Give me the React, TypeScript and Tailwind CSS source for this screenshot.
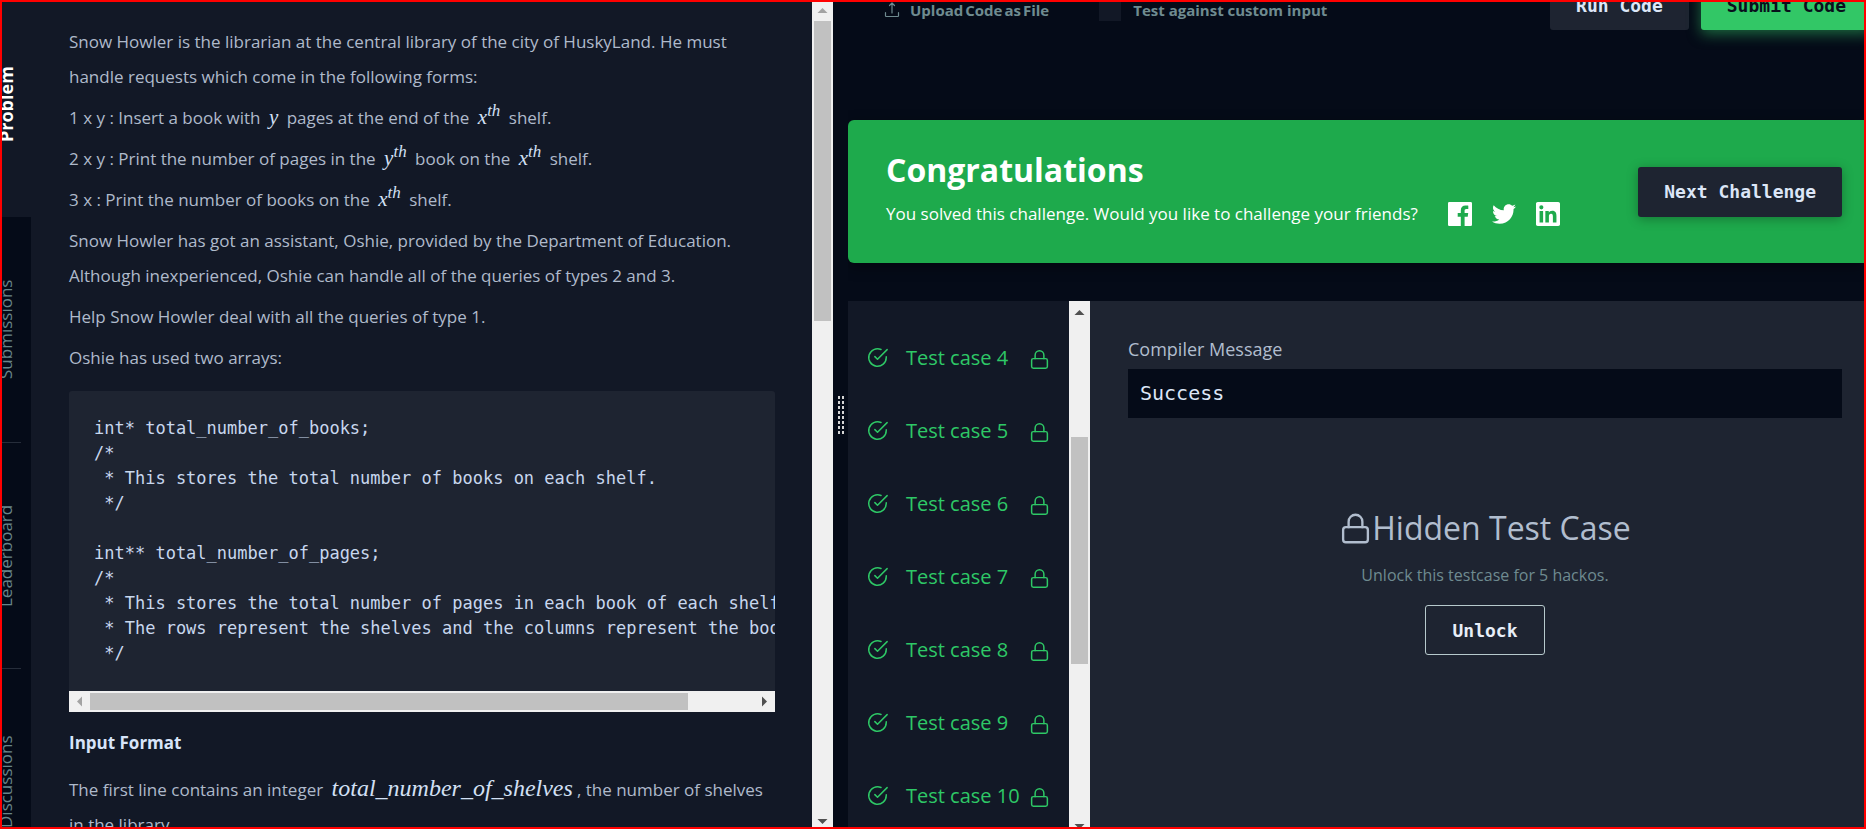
import type { ReactNode } from "react";
import { FaTwitter } from "react-icons/fa";

const CODE = `int* total_number_of_books;
/*
 * This stores the total number of books on each shelf.
 */

int** total_number_of_pages;
/*
 * This stores the total number of pages in each book of each shelf.
 * The rows represent the shelves and the columns represent the books.
 */`;

const TABS = ["Problem", "Submissions", "Leaderboard", "Discussions"];
const CASES = [4, 5, 6, 7, 8, 9, 10];

function LockIcon({ className }: { className: string }) {
  return (
    <svg viewBox="0 0 24 24" fill="none" stroke="currentColor" strokeWidth="1.7" strokeLinecap="round" strokeLinejoin="round" className={className} aria-hidden="true">
      <rect x="3" y="11" width="18" height="11" rx="2" />
      <path d="M7 11V7a5 5 0 0 1 10 0v4" />
    </svg>
  );
}

function CheckIcon() {
  return (
    <svg viewBox="0 0 24 24" fill="none" stroke="currentColor" strokeWidth="1.7" strokeLinecap="round" strokeLinejoin="round" className="size-[21px] shrink-0" aria-hidden="true">
      <path d="M22 11.08V12a10 10 0 1 1-5.93-9.14" />
      <path d="M23 3 12 14.01l-3-3" />
    </svg>
  );
}

function UploadIcon() {
  return (
    <svg viewBox="0 0 16 16" fill="none" stroke="currentColor" strokeWidth="1.2" strokeLinecap="round" strokeLinejoin="round" className="size-4" aria-hidden="true">
      <path d="M1.500 10.500v3.200a.8.8 0 0 0 .8.8h11.400a.8.8 0 0 0 .8-.8v-3.200M8 11V1M5.500 3.500 8 1l2.500 2.500" />
    </svg>
  );
}

function FacebookIcon() {
  return (
    <svg viewBox="0 0 24 24" fill="currentColor" className="size-6" aria-hidden="true">
      <path d="M1.300 0A1.300 1.300 0 0 0 0 1.300v21.400A1.300 1.300 0 0 0 1.300 24h11.500v-9.300H9.700v-3.600h3.100V8.400c0-3.100 1.900-4.800 4.700-4.800 1.300 0 2.500.1 2.800.1V7h-1.900c-1.500 0-1.800.7-1.800 1.800v2.300h3.600l-.5 3.600h-3.100V24h6.100a1.300 1.300 0 0 0 1.300-1.300V1.300A1.300 1.300 0 0 0 22.700 0z" />
    </svg>
  );
}

function LinkedinIcon() {
  return (
    <svg viewBox="0 0 24 24" fill="currentColor" className="size-6" aria-hidden="true">
      <path d="M20.450 20.450h-3.560v-5.570c0-1.330-.03-3.040-1.850-3.040-1.850 0-2.140 1.450-2.140 2.940v5.670H9.350V9h3.410v1.560h.05c.48-.9 1.640-1.850 3.370-1.850 3.600 0 4.270 2.370 4.270 5.460zM5.340 7.430a2.060 2.060 0 1 1 0-4.130 2.060 2.060 0 0 1 0 4.130M7.120 20.450H3.560V9h3.560zM22.220 0H1.770C.79 0 0 .77 0 1.730v20.540C0 23.230.79 24 1.770 24h20.450c.98 0 1.780-.77 1.780-1.730V1.730C24 .77 23.200 0 22.220 0" />
    </svg>
  );
}

function Power({ base }: { base: string }) {
  return (
    <span className="mx-1 font-['Liberation_Serif',serif] text-[21px] leading-none text-[#d3e0f5] italic">
      {base}
      <sup className="relative -top-2 align-baseline text-[17px] leading-none">th</sup>
    </span>
  );
}

function Paragraph({ children }: { children: ReactNode }) {
  return <p className="mb-[6px] leading-[35px]">{children}</p>;
}

function MonoButton({ className, children }: { className: string; children: ReactNode }) {
  return (
    <button type="button" className={`h-[50px] shrink-0 rounded-[3px] px-[26px] font-['DejaVu_Sans_Mono',monospace] text-[18px] font-bold whitespace-nowrap ${className}`}>
      {children}
    </button>
  );
}

function Arrow({ d, className }: { d: string; className: string }) {
  return (
    <svg viewBox="0 0 21 21" fill="currentColor" className={`size-[21px] shrink-0 ${className}`} aria-hidden="true">
      <path d={d} />
    </svg>
  );
}

export default function App() {
  return (
    <div className="grid h-screen grid-cols-[831fr_15px_1016fr] grid-rows-1 overflow-hidden border-2 border-[#ff0000] bg-[#050b18] font-['Open_Sans',sans-serif] text-[17px] text-[#afbacb]">
      <section className="flex min-h-0 min-w-0 overflow-hidden bg-[#121826]">
        <nav className="-mt-[11px] flex w-[29px] shrink-0 flex-col bg-[#050b18]">
          {TABS.map((tab, i) => (
            <div key={tab} className={`flex h-[226px] shrink-0 flex-col ${i === 0 ? "bg-[#121826]" : ""}`}>
              <a href={`#${tab.toLowerCase()}`} className={`-ml-2 flex flex-1 rotate-180 items-center justify-center self-start leading-6 [writing-mode:vertical-rl] ${i === 0 ? "text-[18px] font-bold text-white" : "text-[17px] text-[#68858a]"}`}>
                {tab}
              </a>
              {i > 0 && <span className="mr-[10px] h-px bg-[#262d3a]" />}
            </div>
          ))}
        </nav>

        <article className="min-w-0 flex-1 pt-[22px] pr-[37px] pl-[38px]">
          <Paragraph>
            Snow Howler is the librarian at the central library of the city of HuskyLand. He must handle requests which come in the following forms:
          </Paragraph>
          <Paragraph>
            1 x y : Insert a book with <i className="mx-1 font-['Liberation_Serif',serif] text-[21px] leading-none text-[#d3e0f5]">y</i> pages at the end of the <Power base="x" /> shelf.
          </Paragraph>
          <Paragraph>
            2 x y : Print the number of pages in the <Power base="y" /> book on the <Power base="x" /> shelf.
          </Paragraph>
          <Paragraph>
            3 x : Print the number of books on the <Power base="x" /> shelf.
          </Paragraph>
          <Paragraph>
            Snow Howler has got an assistant, Oshie, provided by the Department of Education. Although inexperienced, Oshie can handle all of the queries of types 2 and 3.
          </Paragraph>
          <Paragraph>Help Snow Howler deal with all the queries of type 1.</Paragraph>
          <Paragraph>Oshie has used two arrays:</Paragraph>

          <div className="mt-4 rounded-t-[3px] bg-[#1e2431]">
            <pre className="overflow-hidden py-[25px] pl-[25px] font-['DejaVu_Sans_Mono',monospace] text-[17px] leading-[25px] text-[#c8d7ee]">{CODE}</pre>
            <div className="flex h-[21px] items-center bg-[#f0f0f0]">
              <Arrow d="M8 10.500l5-5v10z" className="text-[#a3a3a3]" />
              <div className="flex-1">
                <div className="h-[17px] w-[90%] bg-[#c1c1c1]" />
              </div>
              <Arrow d="M13 10.500l-5-5v10z" className="text-[#505050]" />
            </div>
          </div>

          <h2 className="mt-[13px] leading-[35px] font-bold text-[#d7e4f9]">Input Format</h2>
          <p className="mt-3 leading-[35px]">
            The first line contains an integer{" "}
            <i className="mx-1 font-['Liberation_Serif',serif] text-[24px] leading-none text-[#d3e0f5]">total_number_of_shelves</i>, the number of shelves in the library.
          </p>
        </article>

        <div className="-mt-[2px] -mb-[5px] flex w-[21px] shrink-0 flex-col items-center bg-[#f0f0f0]">
          <Arrow d="M10.500 8l5 5h-10z" className="text-[#a3a3a3]" />
          <div className="flex w-full flex-1 flex-col items-center">
            <div className="h-[38%] w-[17px] bg-[#c1c1c1]" />
          </div>
          <Arrow d="M10.500 13l5-5h-10z" className="text-[#505050]" />
        </div>
      </section>

      <div className="flex items-center justify-center">
        <div className="grid grid-cols-2 gap-[2px]">
          {Array.from({ length: 16 }, (_, i) => (
            <span key={i} className="h-[3px] w-[2px] bg-[#d5d5d5]" />
          ))}
        </div>
      </div>

      <section className="flex min-h-0 min-w-0 flex-col overflow-hidden">
        <div className="-mt-[22px] flex h-[50px] shrink-0 items-end text-[15px] text-[#6f8b90]">
          <button type="button" className="mb-[8px] ml-[36px] flex items-center gap-[10px] leading-6 font-bold">
            <UploadIcon />
            <span className="flex gap-[2px]">
              <span>Upload</span>
              <span>Code</span>
              <span>as</span>
              <span>File</span>
            </span>
          </button>
          <label className="mb-[8px] ml-[50px] flex items-center gap-3 leading-6 font-bold">
            <input type="checkbox" className="size-[22px] appearance-none bg-[#121826]" />
            Test against custom input
          </label>
          <div className="-mr-[8px] ml-auto flex gap-3">
            <MonoButton className="bg-[#1e2431] text-[#dce6f7]">Run Code</MonoButton>
            <MonoButton className="bg-[#32c766] text-[#08101c] shadow-[0_4px_14px_rgba(50,199,102,0.5)]">Submit Code</MonoButton>
          </div>
        </div>

        <div className="mt-[90px] flex h-[143px] shrink-0 items-center justify-between rounded-l-md bg-[#1eaa4c] pr-[22px] pl-[38px] text-white shadow-[0_4px_14px_rgba(0,0,0,0.4)]">
          <div>
            <h1 className="text-[32px] leading-[44px] font-bold">Congratulations</h1>
            <div className="flex items-center gap-[30px] leading-[44px]">
              <p className="whitespace-nowrap">You solved this challenge. Would you like to challenge your friends?</p>
              <div className="flex items-center gap-5">
                <a href="#facebook" aria-label="Share on Facebook"><FacebookIcon /></a>
                <a href="#twitter" aria-label="Share on Twitter"><FaTwitter className="size-6" /></a>
                <a href="#linkedin" aria-label="Share on LinkedIn"><LinkedinIcon /></a>
              </div>
            </div>
          </div>
          <MonoButton className="bg-[#1e2431] text-[#dce6f7] shadow-[0_2px_12px_rgba(0,0,0,0.3)]">Next Challenge</MonoButton>
        </div>

        <div className="mt-[38px] -mb-[10px] flex min-h-0 flex-1">
          <ul className="w-[221px] shrink-0 overflow-hidden bg-[#121826] pt-5 text-[20px] text-[#2ec866]">
            {CASES.map((n) => (
              <li key={n}>
                <button type="button" className="flex h-[73px] w-full items-center pr-[19px] pl-[19px] text-left">
                  <CheckIcon />
                  <span className="ml-[18px] flex-1 whitespace-nowrap">Test case {n}</span>
                  <LockIcon className="mt-[3px] size-[21px] shrink-0" />
                </button>
              </li>
            ))}
          </ul>
          <div className="flex w-[21px] shrink-0 flex-col items-center bg-[#f0f0f0]">
            <Arrow d="M10.500 9l5 5h-10z" className="text-[#505050]" />
            <div className="flex w-full flex-1 flex-col items-center pt-[115px]">
              <div className="h-[60%] w-[17px] bg-[#c1c1c1]" />
            </div>
            <Arrow d="M10.500 13l5-5h-10z" className="text-[#505050]" />
          </div>
          <div className="min-w-0 flex-1 bg-[#1e2431] pt-[30px] pr-[22px] pl-[38px]">
            <h2 className="pb-[2px] text-[18px] leading-9 text-[#b1bdce]">Compiler Message</h2>
            <p className="bg-[#050b18] px-3 font-['DejaVu_Sans_Mono',monospace] text-[20px] leading-[49px] text-[#dce6f7]">Success</p>
            <div className="flex flex-col items-center pt-[84px]">
              <h3 className="flex items-center text-[32px] leading-[52px] text-[#b1bdce]">
                <LockIcon className="size-[33px]" />
                Hidden Test Case
              </h3>
              <p className="mt-[9px] mb-[18px] text-[16px] leading-6 text-[#6f8b90]">Unlock this testcase for 5 hackos.</p>
              <MonoButton className="border border-[#b7c9cc] text-[#e8eef8]">Unlock</MonoButton>
            </div>
          </div>
        </div>
      </section>
    </div>
  );
}
